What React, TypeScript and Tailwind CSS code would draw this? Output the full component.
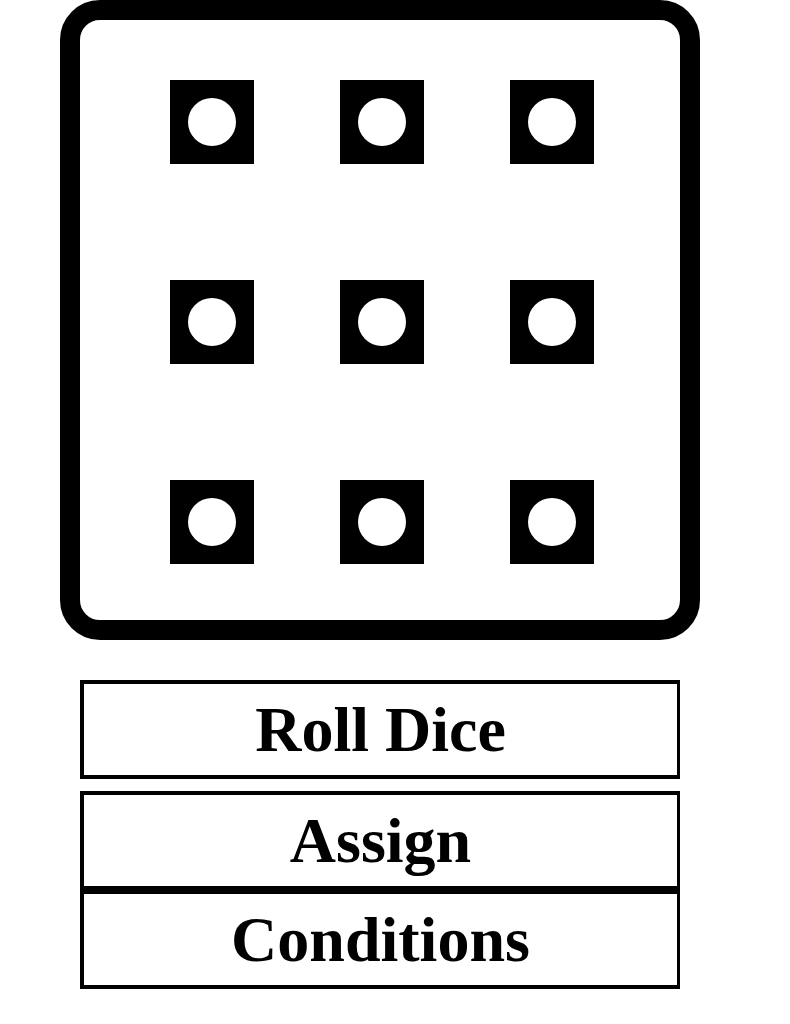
const pips = Array.from({ length: 9 });

function Pip() {
  return (
    <div className="flex h-[84px] w-[84px] items-center justify-center bg-black">
      <div className="h-[48px] w-[48px] rounded-full bg-white" />
    </div>
  );
}

export default function App() {
  return (
    <div className="min-h-[1024px] w-[790px] bg-white text-black" style={{ fontFamily: '"Liberation Serif", "Times New Roman", serif' }}>
      {/* Dice face */}
      <div className="ml-[60px] box-border h-[640px] w-[640px] rounded-[40px] border-[20px] border-black pl-[90px] pt-[60px]">
        <div className="grid grid-cols-[84px_84px_84px] gap-x-[86px] gap-y-[116px]">
          {pips.map((_, i) => (
            <Pip key={i} />
          ))}
        </div>
      </div>

      {/* Actions */}
      <div className="ml-[80px] mt-[40px] flex w-[600px] flex-col">
        <button className="box-border flex h-[99px] w-[600px] items-center justify-center border-4 border-r-[3px] border-black bg-white text-[64px] font-bold">
          Roll Dice
        </button>
        <button className="mt-[12px] box-border flex h-[99px] w-[600px] items-center justify-center border-4 border-r-[3px] border-black bg-white text-[64px] font-bold">
          Assign
        </button>
        <button className="box-border flex h-[99px] w-[600px] items-center justify-center border-4 border-r-[3px] border-black bg-white text-[64px] font-bold">
          Conditions
        </button>
      </div>
    </div>
  );
}
